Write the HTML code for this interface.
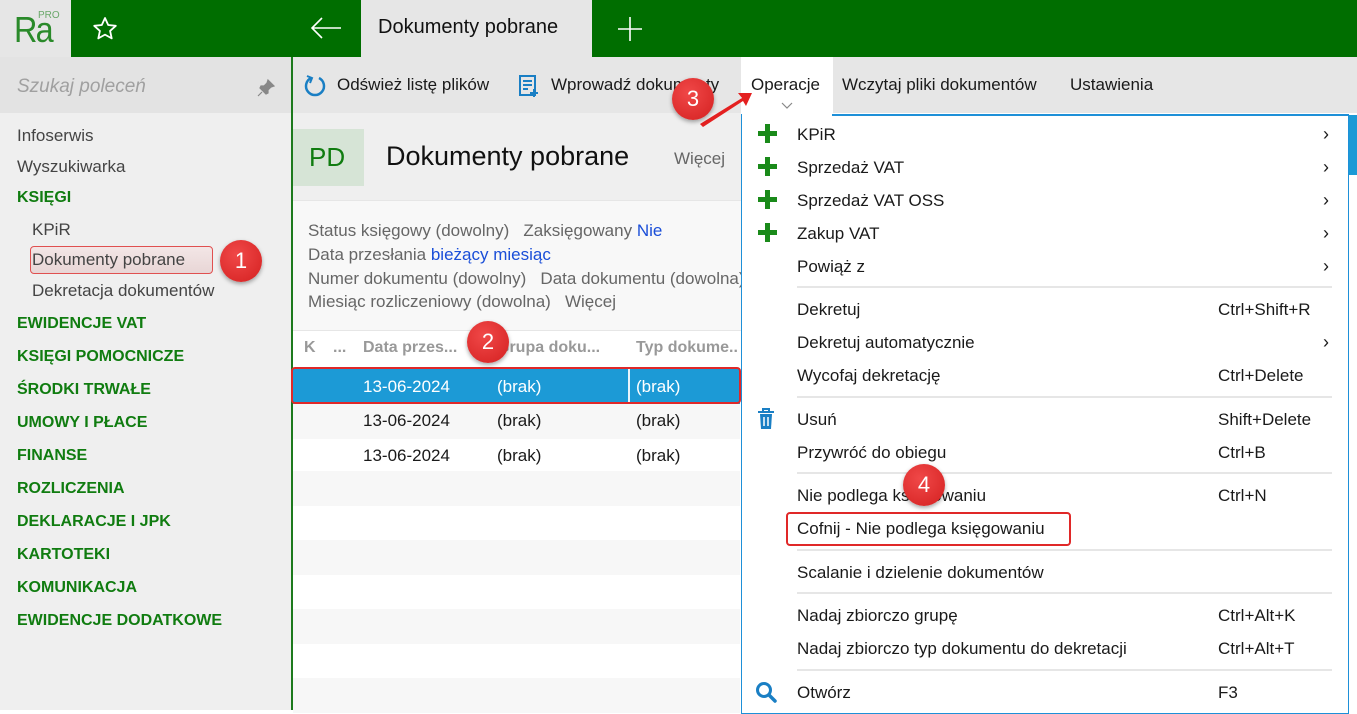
<!DOCTYPE html>
<html><head><meta charset="utf-8"><style>
*{margin:0;padding:0;box-sizing:border-box}
body{width:1357px;height:710px;position:relative;overflow:hidden;font-family:"Liberation Sans",sans-serif;font-size:17px;color:#1a1a1a;background:#fff}
.a{position:absolute;white-space:nowrap}
.g{color:#107c10;font-weight:bold;font-size:16px}
.mi{position:absolute;left:797px;white-space:nowrap}
.sc{position:absolute;left:1218px;white-space:nowrap}
.ch{position:absolute;left:1323px;font-size:18px}
.sep{position:absolute;left:797px;width:535px;height:2px;background:#e6e6e6}
.plus{position:absolute;left:758px;width:19px;height:19px}
.plus:before{content:"";position:absolute;left:7px;top:0;width:5px;height:19px;background:#1a8a1a}
.plus:after{content:"";position:absolute;left:0;top:7px;width:19px;height:5px;background:#1a8a1a}
.badge{position:absolute;width:42px;height:42px;border-radius:50%;background:radial-gradient(circle at 40% 35%,#f04848,#d42020);color:#fff;font-size:22px;text-align:center;line-height:42px;box-shadow:0 2px 4px rgba(0,0,0,.35)}
.row{position:absolute;left:293px;width:447px;height:35px}
.fl{color:#666}
</style></head><body>
<div class="a" style="left:0;top:0;width:71px;height:57px;background:#e6e6e6"></div>
<div class="a" style="left:14px;top:9px;font-size:36px;color:#2a8a2a;letter-spacing:-2px;transform:scaleX(.9);transform-origin:left">Ra</div>
<div class="a" style="left:38px;top:10px;font-size:10px;color:#6aa86a">PRO</div>
<div class="a" style="left:71px;top:0;width:1286px;height:57px;background:#006e00"></div>
<svg class="a" style="left:92px;top:16px" width="26" height="26" viewBox="0 0 26 26"><path d="M13 2l3.2 7 7.6.8-5.7 5.1 1.6 7.5L13 18.6 6.3 22.4l1.6-7.5L2.2 9.8l7.6-.8z" fill="none" stroke="#fff" stroke-width="1.8" stroke-linejoin="round"/></svg>
<svg class="a" style="left:309px;top:15px" width="34" height="26" viewBox="0 0 34 26"><path d="M32 13H3M13 3L3 13l10 10" fill="none" stroke="#fff" stroke-width="1.6"/></svg>
<div class="a" style="left:361px;top:0;width:231px;height:57px;background:#e6e6e6"></div>
<div class="a" style="left:378px;top:16px;font-size:20px;color:#111">Dokumenty pobrane</div>
<svg class="a" style="left:617px;top:16px" width="26" height="26"><path d="M13 1v24M1 13h24" stroke="#fff" stroke-width="1.6"/></svg>
<div class="a" style="left:0;top:57px;width:291px;height:653px;background:#efefef"></div>
<div class="a" style="left:0;top:57px;width:291px;height:56px;background:#e3e3e3"></div>
<div class="a" style="left:17px;top:76px;font-size:19px;color:#a0a0a0;font-style:italic">Szukaj poleceń</div>
<svg class="a" style="left:256px;top:78px" width="20" height="20" viewBox="0 0 20 20"><path d="M12 2l6 6-3 1-3 3 0 3-2 1-6-6 1-2 3 0 3-3z M6 14l-4 4" fill="#888" stroke="#888" stroke-width="1.2"/></svg>
<div class="a" style="left:291px;top:57px;width:2px;height:653px;background:#1d7a1d"></div>
<div class="a" style="left:17px;top:126px;color:#444">Infoserwis</div>
<div class="a" style="left:17px;top:157px;color:#444">Wyszukiwarka</div>
<div class="a g" style="left:17px;top:189px">KSIĘGI</div>
<div class="a" style="left:32px;top:220px;color:#444">KPiR</div>
<div class="a" style="left:30px;top:246px;width:183px;height:28px;border:1.5px solid #e05050;border-radius:4px;background:linear-gradient(#f3e6e6,#e8d6d6)"></div>
<div class="a" style="left:32px;top:250px;color:#444">Dokumenty pobrane</div>
<div class="a" style="left:32px;top:281px;color:#444">Dekretacja dokumentów</div>
<div class="badge" style="left:220px;top:240px">1</div>
<div class="a g" style="left:17px;top:315px">EWIDENCJE VAT</div>
<div class="a g" style="left:17px;top:348px">KSIĘGI POMOCNICZE</div>
<div class="a g" style="left:17px;top:381px">ŚRODKI TRWAŁE</div>
<div class="a g" style="left:17px;top:414px">UMOWY I PŁACE</div>
<div class="a g" style="left:17px;top:447px">FINANSE</div>
<div class="a g" style="left:17px;top:480px">ROZLICZENIA</div>
<div class="a g" style="left:17px;top:513px">DEKLARACJE I JPK</div>
<div class="a g" style="left:17px;top:546px">KARTOTEKI</div>
<div class="a g" style="left:17px;top:579px">KOMUNIKACJA</div>
<div class="a g" style="left:17px;top:612px">EWIDENCJE DODATKOWE</div>
<div class="a" style="left:293px;top:57px;width:1064px;height:56px;background:#e6e6e6"></div>
<svg class="a" style="left:303px;top:74px" width="24" height="24" viewBox="0 0 24 24"><path d="M8 4A9 9 0 1 0 16 4" fill="none" stroke="#1a7fc4" stroke-width="2.5"/><path d="M4 2l5 2-2 5" fill="none" stroke="#1a7fc4" stroke-width="2"/></svg>
<div class="a" style="left:337px;top:75px">Odśwież listę plików</div>
<svg class="a" style="left:517px;top:74px" width="24" height="24" viewBox="0 0 24 24"><rect x="3" y="2" width="15" height="19" fill="none" stroke="#1a7fc4" stroke-width="2"/><path d="M6 7h9M6 11h9M6 15h5M17 15v8M13 19h8" stroke="#1a7fc4" stroke-width="2"/></svg>
<div class="a" style="left:551px;top:75px">Wprowadź dokumenty</div>
<div class="a" style="left:741px;top:57px;width:92px;height:58px;background:#fff"></div>
<div class="a" style="left:751px;top:75px">Operacje</div>
<svg class="a" style="left:781px;top:102px" width="12" height="8"><path d="M1 1l5 5 5-5" fill="none" stroke="#888" stroke-width="1.2"/></svg>
<div class="a" style="left:842px;top:75px">Wczytaj pliki dokumentów</div>
<div class="a" style="left:1070px;top:75px">Ustawienia</div>
<div class="a" style="left:293px;top:113px;width:448px;height:87px;background:#efefef"></div>
<div class="a" style="left:293px;top:129px;width:71px;height:57px;background:#d6e4d6"></div>
<div class="a" style="left:309px;top:142px;font-size:26px;color:#107c10">PD</div>
<div class="a" style="left:386px;top:141px;font-size:27px;color:#111">Dokumenty pobrane</div>
<div class="a" style="left:674px;top:149px;color:#666">Więcej</div>
<div class="a" style="left:293px;top:200px;width:448px;height:130px;background:#f8f8f8;border-top:1px solid #e6e6e6"></div>
<div class="a fl" style="left:308px;top:221px">Status księgowy (dowolny) &nbsp; Zaksięgowany <span style="color:#1a4ed8">Nie</span></div>
<div class="a fl" style="left:308px;top:245px">Data przesłania <span style="color:#1a4ed8">bieżący miesiąc</span></div>
<div class="a fl" style="left:308px;top:269px">Numer dokumentu (dowolny) &nbsp;&nbsp;Data dokumentu (dowolna)</div>
<div class="a fl" style="left:308px;top:292px">Miesiąc rozliczeniowy (dowolna) &nbsp;&nbsp;Więcej</div>
<div class="a" style="left:293px;top:330px;width:448px;height:380px;background:#fff;border-top:1px solid #e6e6e6"></div>
<div class="a" style="left:304px;top:339px;color:#999;font-weight:bold;font-size:16px">K</div>
<div class="a" style="left:333px;top:339px;color:#999;font-weight:bold;font-size:16px">...</div>
<div class="a" style="left:363px;top:339px;color:#999;font-weight:bold;font-size:16px">Data przes...</div>
<div class="a" style="left:497px;top:339px;color:#999;font-weight:bold;font-size:16px">Grupa doku...</div>
<div class="a" style="left:636px;top:339px;color:#999;font-weight:bold;font-size:16px">Typ dokume..</div>
<div class="row" style="top:369px;background:#1c9ad6"></div>
<div class="a" style="left:628px;top:369px;width:2px;height:34px;background:#e8f4fb"></div>
<div class="a" style="left:291px;top:367px;width:450px;height:37px;border:2px solid #e02828;border-radius:4px"></div>
<div class="a" style="left:363px;top:377px;color:#fff">13-06-2024</div>
<div class="a" style="left:497px;top:377px;color:#fff">(brak)</div>
<div class="a" style="left:636px;top:377px;color:#fff">(brak)</div>
<div class="row" style="top:404px;background:#f7f7f7"></div>
<div class="a" style="left:363px;top:411px">13-06-2024</div><div class="a" style="left:497px;top:411px">(brak)</div><div class="a" style="left:636px;top:411px">(brak)</div>
<div class="a" style="left:363px;top:446px">13-06-2024</div><div class="a" style="left:497px;top:446px">(brak)</div><div class="a" style="left:636px;top:446px">(brak)</div>
<div class="row" style="top:471px;background:#f7f7f7"></div>
<div class="row" style="top:540px;background:#f7f7f7"></div>
<div class="row" style="top:609px;background:#f7f7f7"></div>
<div class="row" style="top:678px;background:#f7f7f7"></div>
<div class="badge" style="left:467px;top:321px">2</div>
<div class="a" style="left:1348px;top:115px;width:9px;height:60px;background:#1c9ad6"></div>
<div class="a" style="left:741px;top:114px;width:608px;height:600px;background:#fff;border:1px solid #1e90d8;border-top:2px solid #1e90d8"></div>
<div class="a" style="left:742px;top:113px;width:90px;height:3px;background:#fff"></div>
<div class="plus" style="top:124px"></div><div class="mi" style="top:125px">KPiR</div><div class="ch" style="top:124px">›</div>
<div class="plus" style="top:157px"></div><div class="mi" style="top:158px">Sprzedaż VAT</div><div class="ch" style="top:157px">›</div>
<div class="plus" style="top:190px"></div><div class="mi" style="top:191px">Sprzedaż VAT OSS</div><div class="ch" style="top:190px">›</div>
<div class="plus" style="top:223px"></div><div class="mi" style="top:224px">Zakup VAT</div><div class="ch" style="top:223px">›</div>
<div class="mi" style="top:257px">Powiąż z</div><div class="ch" style="top:256px">›</div>
<div class="sep" style="top:286px"></div>
<div class="mi" style="top:300px">Dekretuj</div><div class="sc" style="top:300px">Ctrl+Shift+R</div>
<div class="mi" style="top:333px">Dekretuj automatycznie</div><div class="ch" style="top:332px">›</div>
<div class="mi" style="top:366px">Wycofaj dekretację</div><div class="sc" style="top:366px">Ctrl+Delete</div>
<div class="sep" style="top:396px"></div>
<svg class="a" style="left:757px;top:408px" width="18" height="22" viewBox="0 0 18 22"><path d="M1 4h16M6 4V1h6v3" stroke="#1a7fc4" stroke-width="2" fill="none"/><path d="M3 6h12l-1 15H4z" fill="#1a7fc4"/><path d="M7 9v9M11 9v9" stroke="#fff" stroke-width="1.5"/></svg>
<div class="mi" style="top:410px">Usuń</div><div class="sc" style="top:410px">Shift+Delete</div>
<div class="mi" style="top:443px">Przywróć do obiegu</div><div class="sc" style="top:443px">Ctrl+B</div>
<div class="sep" style="top:472px"></div>
<div class="mi" style="top:486px">Nie podlega księgowaniu</div><div class="sc" style="top:486px">Ctrl+N</div>
<div class="a" style="left:786px;top:512px;width:285px;height:34px;border:2px solid #e02828;border-radius:4px"></div>
<div class="mi" style="top:519px">Cofnij - Nie podlega księgowaniu</div>
<div class="badge" style="left:903px;top:464px">4</div>
<div class="sep" style="top:549px"></div>
<div class="mi" style="top:563px">Scalanie i dzielenie dokumentów</div>
<div class="sep" style="top:592px"></div>
<div class="mi" style="top:606px">Nadaj zbiorczo grupę</div><div class="sc" style="top:606px">Ctrl+Alt+K</div>
<div class="mi" style="top:639px">Nadaj zbiorczo typ dokumentu do dekretacji</div><div class="sc" style="top:639px">Ctrl+Alt+T</div>
<div class="sep" style="top:669px"></div>
<svg class="a" style="left:755px;top:681px" width="22" height="22" viewBox="0 0 22 22"><circle cx="9" cy="9" r="6.5" fill="none" stroke="#1a7fc4" stroke-width="3"/><path d="M14 14l6 6" stroke="#1a7fc4" stroke-width="3.5" stroke-linecap="round"/></svg>
<div class="mi" style="top:683px">Otwórz</div><div class="sc" style="top:683px">F3</div>
<svg class="a" style="left:690px;top:84px" width="70" height="45" viewBox="0 0 70 45"><path d="M10 40L52 14l-4-5 14 0-6 13-3-5L13 43z" fill="#e42020"/></svg>
<div class="badge" style="left:672px;top:78px">3</div>
</body></html>
